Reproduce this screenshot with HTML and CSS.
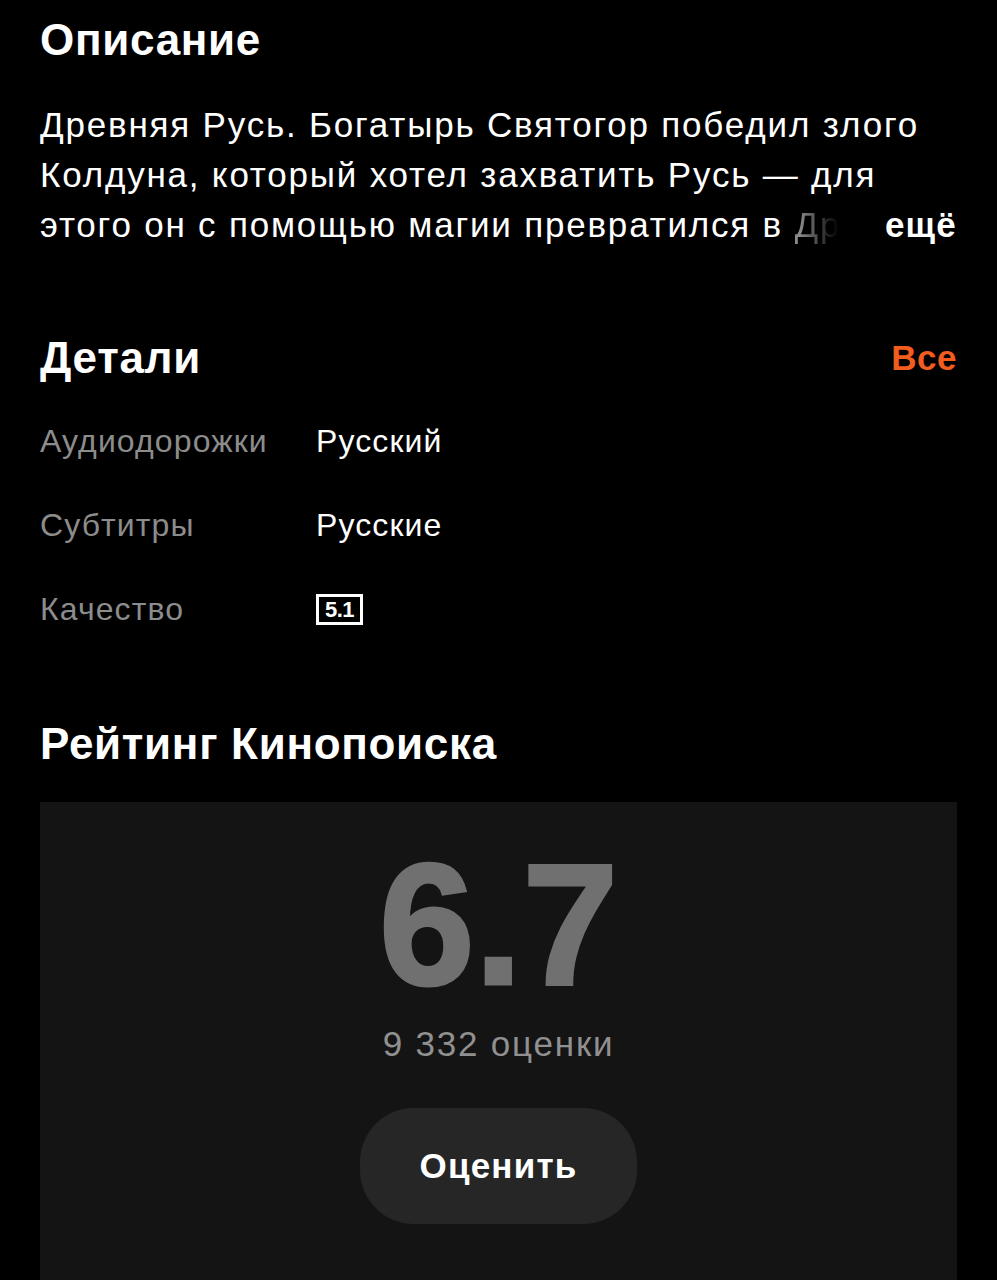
FILE: index.html
```html
<!DOCTYPE html>
<html lang="ru">
<head>
<meta charset="utf-8">
<link rel="stylesheet" href="styles.css">
</head>
<body>
<main class="page">
  <section class="section description">
    <h2 class="title">Описание</h2>
    <p class="desc-text">Древняя Русь. Богатырь Святогор победил злого<br>Колдуна, который хотел захватить Русь — для<br>этого он с помощью магии превратился в <span class="fade">Др</span><span class="more">ещё</span></p>
  </section>

  <section class="section details">
    <div class="head-row">
      <h2 class="title">Детали</h2>
      <a class="all">Все</a>
    </div>
    <dl class="detail-list">
      <div class="detail-row"><dt>Аудиодорожки</dt><dd>Русский</dd></div>
      <div class="detail-row"><dt>Субтитры</dt><dd>Русские</dd></div>
      <div class="detail-row"><dt>Качество</dt><dd class="dd-badge"><span class="badge">5.1</span></dd></div>
    </dl>
  </section>

  <section class="section rating">
    <h2 class="title">Рейтинг Кинопоиска</h2>
    <div class="rating-card">
      <div class="score">6.7</div>
      <div class="votes">9 332 оценки</div>
      <button class="rate-btn">Оценить</button>
    </div>
  </section>
</main>
</body>
</html>
```

FILE: styles.css
```css
html, body {
  margin: 0;
  padding: 0;
  background: #000;
}
body {
  font-family: "Liberation Sans", Arial, sans-serif;
  color: #fff;
  width: 997px;
  height: 1280px;
  overflow: hidden;
}
.page {
  padding: 0 40px;
}
.title {
  margin: 0;
  font-size: 44px;
  font-weight: 700;
  letter-spacing: 0.7px;
  line-height: 1;
}
.description {
  padding-top: 18px;
}
.desc-text {
  margin: 38px 0 0;
  font-size: 35px;
  letter-spacing: 1.8px;
  line-height: 50px;
  color: #fff;
  white-space: nowrap;
  position: relative;
}
.fade {
  background: linear-gradient(to right, #8a8a8a 10%, #000 95%);
  -webkit-background-clip: text;
  background-clip: text;
  color: transparent;
}
.more {
  position: absolute;
  right: 0;
  bottom: 0;
  font-weight: 700;
  letter-spacing: 1.2px;
  background: #000;
  padding-left: 10px;
}
.details {
  margin-top: 86px;
}
.head-row {
  display: flex;
  justify-content: space-between;
  align-items: center;
}
.all {
  color: #f25c1f;
  font-weight: 700;
  font-size: 35px;
  letter-spacing: 0.5px;
}
.detail-list {
  margin: 19px 0 0;
}
.detail-row {
  display: flex;
  align-items: center;
  height: 84px;
  margin: 0;
}
.detail-row dt {
  width: 276px;
  color: #8c8c8c;
  font-size: 32px;
  letter-spacing: 1.1px;
}
.detail-row dd {
  margin: 0;
  color: #fff;
  font-size: 32px;
  letter-spacing: 1.1px;
}
.dd-badge {
  display: flex;
  align-items: center;
}
.badge {
  display: block;
  border: 3px solid #fff;
  font-size: 22px;
  font-weight: 700;
  line-height: 25px;
  padding: 0 6px;
  letter-spacing: -0.5px;
}
.rating {
  margin-top: 71px;
}
.rating-card {
  margin-top: 36px;
  background: #141414;
  height: 520px;
  display: flex;
  flex-direction: column;
  align-items: center;
}
.score {
  margin-top: 36px;
  font-size: 172px;
  font-weight: 700;
  color: #707070;
  -webkit-text-stroke: 3px #707070;
  letter-spacing: 0;
  line-height: 1;
}
.votes {
  margin-top: 14px;
  font-size: 35px;
  letter-spacing: 1.8px;
  color: #909090;
}
.rate-btn {
  margin-top: 44px;
  width: 277px;
  height: 116px;
  border: none;
  border-radius: 54px;
  background: #262626;
  color: #fff;
  font-family: inherit;
  font-size: 35px;
  letter-spacing: 1.2px;
  font-weight: 700;
}
```
